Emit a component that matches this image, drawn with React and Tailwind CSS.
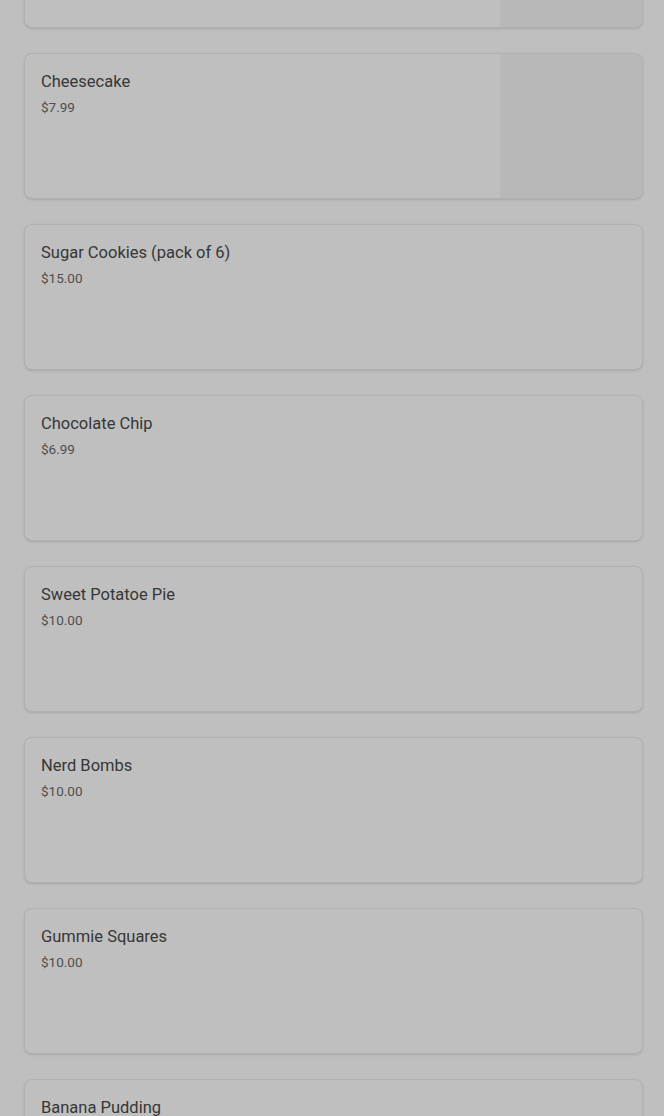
import React from 'react';

const items = [
    { name: 'Lemon Bars', price: '$8.99', hasImage: true },
    { name: 'Cheesecake', price: '$7.99', hasImage: true },
    { name: 'Sugar Cookies (pack of 6)', price: '$15.00' },
    { name: 'Chocolate Chip', price: '$6.99' },
    { name: 'Sweet Potatoe Pie', price: '$10.00' },
    { name: 'Nerd Bombs', price: '$10.00' },
    { name: 'Gummie Squares', price: '$10.00' },
    { name: 'Banana Pudding', price: '$10.00' },
];

const MenuCard = ({ name, price, hasImage }) => (
    <div className="flex h-[146px] bg-white rounded-lg border border-[#ececec] shadow-sm overflow-hidden">
        <div className="flex-1 px-4 pt-[18px]">
            <h3 className="text-[16.5px] leading-5 text-[#4a4a4a]">{name}</h3>
            <p className="mt-[5px] text-[13.5px] leading-5 text-[#6a6a6a]">{price}</p>
        </div>
        {hasImage && <div className="w-[142px] bg-[#f6f6f6]" />}
    </div>
);

const App = () => (
    <div className="min-h-screen bg-white overflow-hidden" style={{ fontFamily: 'Roboto, "Noto Sans", sans-serif' }}>
        <div className="-mt-[118px] pl-6 pr-[21px] flex flex-col gap-[25px]">
            {items.map(item => (
                <MenuCard key={item.name} {...item} />
            ))}
        </div>
        {/* modal backdrop */}
        <div className="fixed inset-0 bg-black/25" />
    </div>
);

export default App;
